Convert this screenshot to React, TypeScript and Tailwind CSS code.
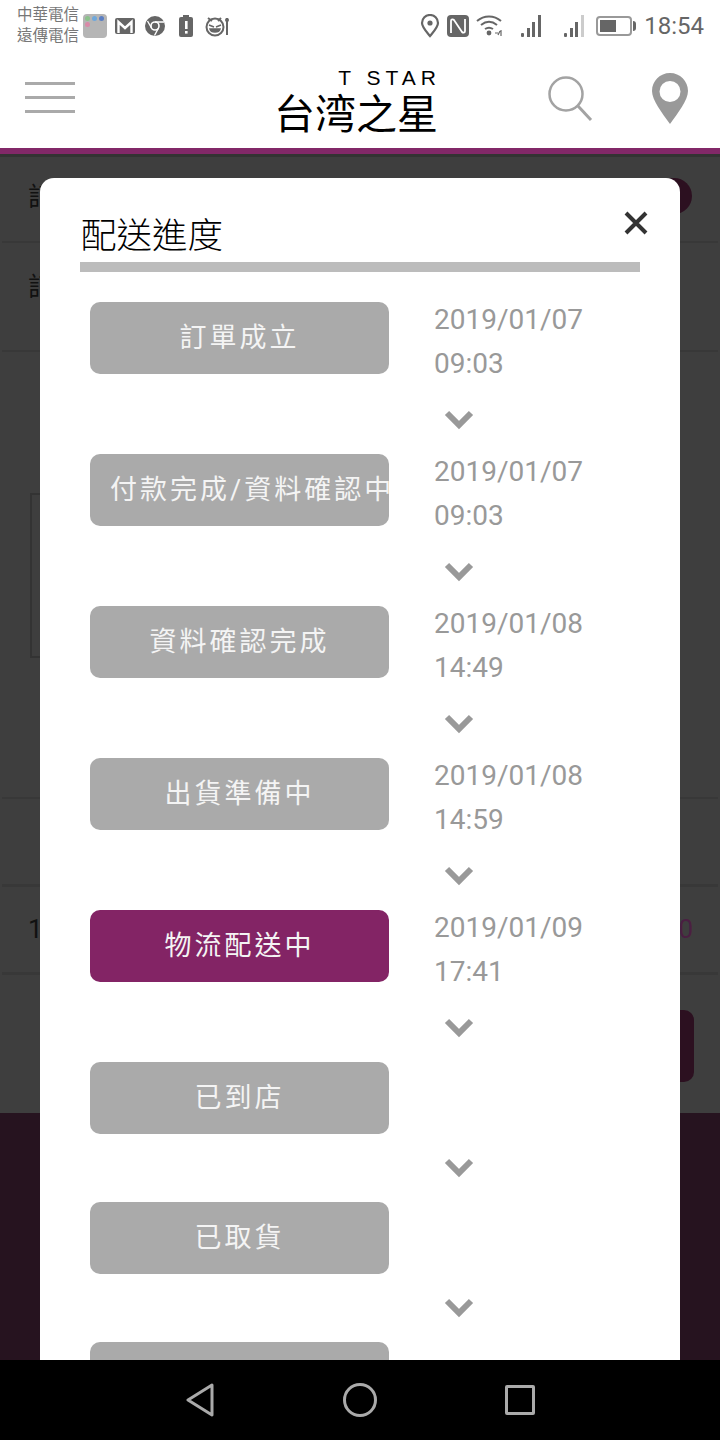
const FONT = "[font-family:Roboto,'Noto_Sans_CJK_TC',sans-serif]";

const steps = [
  { label: "訂單成立", date: "2019/01/07", time: "09:03" },
  { label: "付款完成/資料確認中", date: "2019/01/07", time: "09:03" },
  { label: "資料確認完成", date: "2019/01/08", time: "14:49" },
  { label: "出貨準備中", date: "2019/01/08", time: "14:59" },
  { label: "物流配送中", date: "2019/01/09", time: "17:41", active: true },
  { label: "已到店" },
  { label: "已取貨" },
  { label: "" }, // cut off by the nav bar, only the button's top shows
];

function Signal({ faded }: { faded?: boolean }) {
  return (
    <svg width="24" height="24" viewBox="0 0 24 24">
      <rect x="1" y="19" width="3" height="4" rx="1" fill="#666" />
      <rect x="7" y="14" width="3" height="9" fill="#666" />
      <rect x="12" y="8" width="3" height="15" fill="#666" />
      <rect x="18" y="1" width="3" height="22" fill={faded ? "#ccc" : "#666"} />
    </svg>
  );
}

function StatusBar() {
  return (
    <div className="flex h-[52px] items-center bg-white pl-[17px] pr-[16px] text-[#777]">
      <div className="w-[66px] text-[15.5px] leading-[21px]">
        <div>中華電信</div>
        <div>遠傳電信</div>
      </div>
      <div className="grid h-6 w-6 grid-cols-3 content-start gap-[1px] rounded bg-[#b5b5b5] p-[2px]">
        <span className="h-[5px] w-[5px] rounded-full bg-[#8cc28c]" />
        <span className="h-[5px] w-[5px] rounded-full bg-[#6fa8dc]" />
        <span className="h-[5px] w-[5px] rounded-full bg-[#5b7fc4]" />
        <span className="h-[5px] w-[5px] rounded-full bg-[#d98aa8]" />
      </div>
      <svg className="ml-[8px]" width="20" height="16" viewBox="0 0 20 16">
        <rect width="20" height="16" rx="2" fill="#666" />
        <path d="M3.500 15V4l6.500 6 6.500-6v11" fill="none" stroke="#fff" strokeWidth="2.400" />
      </svg>
      <svg className="ml-[10px]" width="20" height="20" viewBox="0 0 20 20">
        <circle cx="10" cy="10" r="10" fill="#666" />
        <circle cx="10" cy="10" r="4" fill="none" stroke="#fff" strokeWidth="1.600" />
        <path d="M10 6h9M6.500 12 2.500 5M13.500 12 9.500 19.500" stroke="#fff" strokeWidth="1.400" />
      </svg>
      <svg className="ml-[14px]" width="14" height="22" viewBox="0 0 14 22">
        <rect y="2" width="14" height="20" rx="2" fill="#666" />
        <rect x="4" width="6" height="2" fill="#666" />
        <rect x="6" y="6" width="2.600" height="8" fill="#fff" />
        <rect x="6" y="16" width="2.600" height="2.600" fill="#fff" />
      </svg>
      <svg className="ml-[12px]" width="24" height="22" viewBox="0 0 24 22">
        <circle cx="10" cy="12" r="8.500" fill="none" stroke="#666" strokeWidth="2" />
        <path d="M3 3l4 3M16 3l-3 3" stroke="#666" strokeWidth="2" />
        <path d="M4 10l5 2M16 10l-5 2M5 14h10c-1 4-9 4-10 0z" stroke="#666" strokeWidth="1.500" fill="#666" />
        <path d="M22 3v17" stroke="#666" strokeWidth="2" />
        <circle cx="22" cy="5" r="2" fill="#666" />
      </svg>

      <div className="ml-auto flex items-center">
        <svg width="20" height="24" viewBox="0 0 20 24">
          <path d="M10 22C5 16 2 13 2 9a8 8 0 0 1 16 0c0 4-3 7-8 13z" fill="none" stroke="#666" strokeWidth="2.200" />
          <circle cx="10" cy="9" r="2.600" fill="#666" />
        </svg>
        <svg className="ml-[7px]" width="22" height="22" viewBox="0 0 22 22">
          <rect width="22" height="22" rx="4" fill="#666" />
          <path d="M4 18V6c0-2 2-2 3-1l8 12c1 1 3 1 3-1V4" fill="none" stroke="#fff" strokeWidth="1.800" />
        </svg>
        <svg className="ml-[7px]" width="28" height="24" viewBox="0 0 28 24">
          <path d="M1 7c7-6 17-6 24 0M5 11c5-4 11-4 16 0M9 15c3-2 5-2 8 0" fill="none" stroke="#666" strokeWidth="2" />
          <circle cx="13" cy="19" r="2.400" fill="#666" />
          <path d="M19 19h3M25 16v6M22 21l2-4" stroke="#666" strokeWidth="1.200" fill="none" />
        </svg>
        <div className="ml-[16px]"><Signal /></div>
        <div className="ml-[19px]"><Signal faded /></div>
        <div className="ml-[9px] flex items-center">
          <div className="flex h-5 w-[36px] rounded-[4px] border-2 border-[#999] p-[2px]">
            <div className="h-full w-[16px] bg-[#666]" />
          </div>
          <div className="ml-[1px] h-[10px] w-[3px] rounded-r bg-[#666]" />
        </div>
        <span className="ml-[8px] text-[24px] leading-none text-[#666]">18:54</span>
      </div>
    </div>
  );
}

function Header() {
  return (
    <div className="relative flex h-[96px] items-start bg-white">
      <div className="ml-[25px] mt-[30px] flex w-[50px] flex-col gap-[11px]">
        <div className="h-[3px] bg-[#aaa]" />
        <div className="h-[3px] bg-[#aaa]" />
        <div className="h-[3px] bg-[#aaa]" />
      </div>
      <div className="ml-[203px] mt-[15px] flex w-[160px] flex-col items-end text-black">
        <div className="-mr-[3px] whitespace-pre text-[21px] font-medium leading-[22px] tracking-[5px] [font-family:'Liberation_Sans',sans-serif]">
          T STAR
        </div>
        <div className="-ml-[1px] whitespace-nowrap text-[41px] leading-[44px] [font-family:'Noto_Sans_CJK_TC',sans-serif]">
          台湾之星
        </div>
      </div>
      <svg className="ml-[109px] mt-[22px]" width="48" height="50" viewBox="0 0 48 50">
        <circle cx="19" cy="20" r="16.500" fill="none" stroke="#a3a3a3" strokeWidth="2.500" />
        <path d="M31 32l13 14" stroke="#a3a3a3" strokeWidth="3" />
      </svg>
      <svg className="ml-[57px] mt-[21px]" width="36" height="51" viewBox="0 0 36 51">
        <path
          fillRule="evenodd"
          d="M18 0c10 0 18 8 18 18 0 9-10 22-18 33C10 40 0 27 0 18 0 8 8 0 18 0zm0 8a10.500 10.500 0 1 0 0 21 10.500 10.500 0 0 0 0-21z"
          fill="#999"
        />
      </svg>
    </div>
  );
}

// page behind the dialog, only its edges are visible
function Backdrop() {
  return (
    <div className="flex flex-1 flex-col bg-[#3e3e3e] text-[#111]">
      <div className="h-[3px] bg-[#333]" />
      <div className="mx-[2px] flex h-[86px] items-start border-b-2 border-[#383838] pl-[26px] pr-[26px] pt-[21px] text-[26px]">
        <span>訂</span>
        <div className="ml-auto h-[36px] w-[36px] rounded-full bg-[#2c1020]" />
      </div>
      <div className="mx-[2px] mt-[1px] flex h-[108px] items-start border-b-2 border-[#383838] pl-[26px] pt-[24px] text-[26px]">
        訂
      </div>
      <div className="ml-[30px] mt-[141px] h-[165px] w-[300px] border-2 border-[#333]" />
      <div className="mx-[2px] mt-[139px] h-[90px] border-b-[3px] border-t-[2px] border-[#383838]" />
      <div className="mx-[2px] flex h-[88px] items-center justify-between border-b-[3px] border-[#383838] pl-[26px] pr-[25px] text-[26px]">
        <span>1</span>
        <span className="text-[#4a1f42]">0</span>
      </div>
      <div className="flex h-[138px] items-start justify-end pr-[26px] pt-[35px]">
        <div className="h-[72px] w-[100px] rounded-[10px] bg-[#2c1020]" />
      </div>
      <div className="flex-1 bg-[#26131f]" />
    </div>
  );
}

function Step({ label, date, time, active }: { label: string; date?: string; time?: string; active?: boolean }) {
  return (
    <div>
      <div className={`flex items-start ${date ? "h-[84px]" : "h-[72px]"}`}>
        <div
          className={`h-[72px] w-[299px] whitespace-nowrap rounded-[10px] px-[20px] text-center text-[27px] leading-[72px] tracking-[3px] text-[#f4f4f4] ${
            active ? "bg-[#832465]" : "bg-[#aaaaaa]"
          }`}
        >
          {label}
        </div>
        {date && (
          <div className="-mt-[4px] ml-[45px] text-[28px] leading-[44px] text-[#999]">
            <div>{date}</div>
            <div>{time}</div>
          </div>
        )}
      </div>
      <div className="ml-[354px] h-[68px] pt-[24px]">
        <svg width="30" height="20" viewBox="0 0 30 20">
          <path d="M3 3l12 12L27 3" fill="none" stroke="#999" strokeWidth="6" />
        </svg>
      </div>
    </div>
  );
}

function Dialog() {
  return (
    <div className="absolute bottom-[80px] left-[40px] top-[178px] w-[640px] overflow-hidden rounded-t-[14px] bg-white px-[40px]">
      <div className="flex h-[94px] items-start justify-between border-b-[10px] border-[#bcbcbc]">
        <h2 className="ml-[1px] mt-[34px] text-[35.500px] font-light leading-[48px] text-black">配送進度</h2>
        <svg className="-mr-[8px] mt-[33px]" width="24" height="24" viewBox="0 0 24 24">
          <path d="M2 2l20 20M22 2L2 22" stroke="#333" strokeWidth="4" />
        </svg>
      </div>
      <div className="ml-[10px] mt-[30px]">
        {steps.map((s, i) => (
          <Step key={i} {...s} />
        ))}
      </div>
    </div>
  );
}

function NavBar() {
  return (
    <div className="flex h-[80px] items-center bg-black pl-[186px]">
      <svg width="28" height="34" viewBox="0 0 28 34">
        <path d="M26 2L2 17l24 15z" fill="none" stroke="#aaa" strokeWidth="3" strokeLinejoin="round" />
      </svg>
      <svg className="ml-[129px]" width="34" height="34" viewBox="0 0 34 34">
        <circle cx="17" cy="17" r="15.500" fill="none" stroke="#aaa" strokeWidth="3" />
      </svg>
      <div className="ml-[128px] h-[30px] w-[30px] rounded-[2px] border-[3px] border-[#aaa]" />
    </div>
  );
}

export default function App() {
  return (
    <div className={`relative flex h-[1440px] w-[720px] flex-col overflow-hidden ${FONT}`}>
      <StatusBar />
      <Header />
      <div className="h-[6px] bg-[#822868]" />
      <Backdrop />
      <Dialog />
      <NavBar />
    </div>
  );
}
